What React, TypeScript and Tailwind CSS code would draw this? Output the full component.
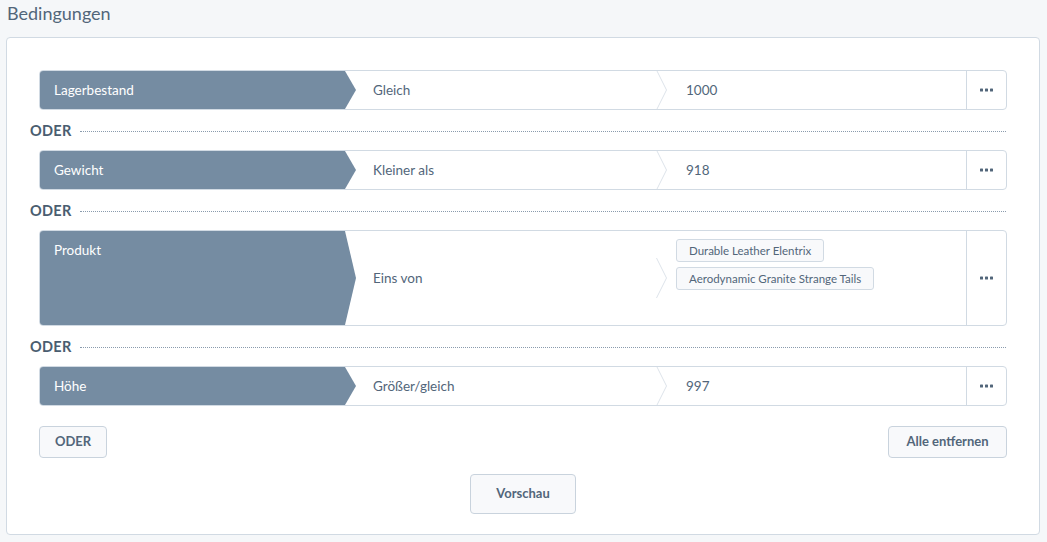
import React from "react";

type Condition = {
  field: string;
  operator: string;
  value?: string;
  tags?: string[];
};

const conditions: Condition[] = [
  { field: "Lagerbestand", operator: "Gleich", value: "1000" },
  { field: "Gewicht", operator: "Kleiner als", value: "918" },
  { field: "Produkt", operator: "Eins von", tags: ["Durable Leather Elentrix", "Aerodynamic Granite Strange Tails"] },
  { field: "Höhe", operator: "Größer/gleich", value: "997" },
];

const Dots = () => (
  <svg width="13" height="4" viewBox="0 0 13 4" className="fill-[#52667a]">
    <rect x="0" y="0.5" width="3" height="3" rx="0.6" />
    <rect x="5" y="0.5" width="3" height="3" rx="0.6" />
    <rect x="10" y="0.5" width="3" height="3" rx="0.6" />
  </svg>
);

const Chevron = () => (
  <svg width="11" height="40" viewBox="0 0 11 40" className="shrink-0 self-center">
    <path d="M0.5 0 L10.5 20 L0.5 40" fill="none" stroke="#dde3ea" strokeWidth="1" />
  </svg>
);

const Row = ({ c }: { c: Condition }) => {
  const tall = !!c.tags;
  return (
    <div className={`flex border border-[#d1dae3] rounded overflow-hidden bg-white ${tall ? "h-[96px]" : "h-10"}`}>
      <div className="w-[316px] shrink-0 bg-[#758ca2] text-white pl-[14px] [clip-path:polygon(0_0,calc(100%-11px)_0,100%_50%,calc(100%-11px)_100%,0_100%)]">
        <div className="h-[38px] leading-[39px]">{c.field}</div>
      </div>
      <div className="w-[300px] shrink-0 flex items-center pl-[17px] text-[#52667a] leading-none pt-px">{c.operator}</div>
      <Chevron />
      {c.tags ? (
        <div className="flex-1 flex flex-col items-start gap-[5px] pl-[9px] pt-[8px]">
          {c.tags.map(t => (
            <span key={t} className="h-[23px] leading-[21px] px-3 border border-[#d1dae3] rounded-[3px] bg-[#f8f9fb] text-[11.5px] text-[#52667a]">{t}</span>
          ))}
        </div>
      ) : (
        <div className="flex-1 flex items-center pl-[19px] text-[#52667a] leading-none pt-px">{c.value}</div>
      )}
      <div className="w-10 shrink-0 border-l border-[#d1dae3] flex items-center justify-center">
        <Dots />
      </div>
    </div>
  );
};

const Oder = () => (
  <div className="h-10 flex items-center -ml-[9px] pt-[2px]">
    <span className="text-[14.5px] font-bold text-[#4a5d70] tracking-[0.3px]">ODER</span>
    <div className="flex-1 ml-2 mr-px border-t border-dotted border-[#8a9bad]" />
  </div>
);

export default function App() {
  return (
    <div className="min-h-screen w-full bg-[#f5f7f9] pt-[1px] pb-[7px] text-[13.5px] font-['Lato','Noto_Sans',sans-serif]">
      <h2 className="pl-[7px] h-[36px] text-[18px] leading-[24px] text-[#52667a]">Bedingungen</h2>
      <div className="ml-[6px] mr-[7px] bg-white border border-[#d1dae3] rounded px-[32px] pt-[32px] pb-[20px]">
        {conditions.map((c, i) => (
          <React.Fragment key={c.field}>
            {i > 0 && <Oder />}
            <Row c={c} />
          </React.Fragment>
        ))}
        <div className="flex justify-between mt-5">
          <button className="h-8 w-[68px] rounded border border-[#c9d3dd] bg-[#f8f9fb] text-[13px] font-bold text-[#52667a]">ODER</button>
          <button className="h-8 w-[119px] rounded border border-[#c9d3dd] bg-[#f8f9fb] text-[13px] font-bold text-[#52667a]">Alle entfernen</button>
        </div>
        <div className="flex justify-center mt-4">
          <button className="h-10 w-[106px] rounded border border-[#c9d3dd] bg-[#f8f9fb] text-[13px] font-bold text-[#52667a]">Vorschau</button>
        </div>
      </div>
    </div>
  );
}
